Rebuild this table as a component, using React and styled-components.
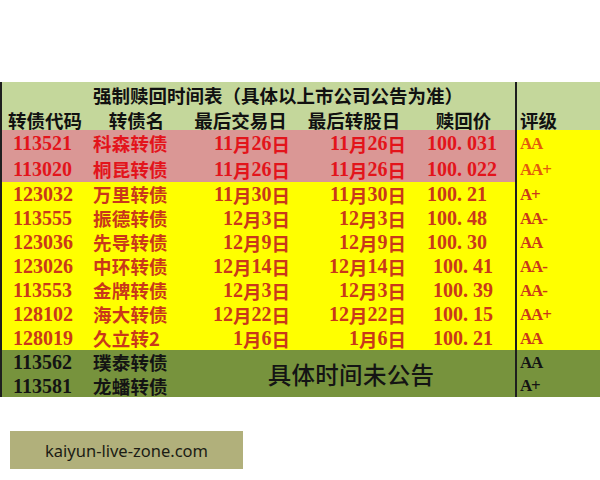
import React from "react";
import styled, { createGlobalStyle } from "styled-components";

const Global = createGlobalStyle`
  html, body { margin: 0; padding: 0; background: #ffffff; }
  body { width: 600px; height: 480px; overflow: hidden; }
`;

const CJK = `"Noto Sans CJK SC", "Noto Sans", sans-serif`;
const NUM = `"Liberation Serif", "Noto Sans CJK SC", serif`;

const tones = {
  head: { bg: "#c4d79b", fg: "#111111", rbg: "#c4d79b", rfg: "#111111" },
  pink: { bg: "#da9795", fg: "#e3141b", rbg: "#ffff00", rfg: "#e25a0c" },
  yellow: { bg: "#ffff00", fg: "#c9381a", rbg: "#ffff00", rfg: "#c9381a" },
  green: { bg: "#77933d", fg: "#141414", rbg: "#77933d", rfg: "#141414" },
};

const Page = styled.div`
  width: 600px;
  height: 480px;
  padding-top: 82px;
  box-sizing: border-box;
  display: flex;
  flex-direction: column;
`;

const Table = styled.div`
  display: grid;
  grid-template-columns: 86px 97px 111px 116px 103px 85px;
  grid-template-rows: 24px 24px 26px 26px repeat(7, 24px) 24px 23px;
  border-left: 2px solid #1e1e1e;
`;

const CellBase = styled.div`
  display: flex;
  align-items: center;
  white-space: nowrap;
  overflow: visible;
  background: ${(p) => tones[p.$tone].bg};
  color: ${(p) => tones[p.$tone].fg};
`;

const TitleCell = styled(CellBase)`
  grid-column: 1 / span 5;
  padding-left: 91px;
  padding-top: 1px;
  font-family: ${CJK};
  font-size: 18.5px;
  font-weight: 700;
`;

const HeadCell = styled(CellBase)`
  justify-content: center;
  padding-top: 3px;
  font-family: ${CJK};
  font-size: 18.5px;
  font-weight: 700;
`;

const RatingCell = styled(CellBase)`
  grid-column: 6;
  background: ${(p) => tones[p.$tone].rbg};
  color: ${(p) => tones[p.$tone].rfg};
  border-left: 2px solid #1e1e1e;
  padding-left: 3px;
  padding-top: ${(p) => (p.$head ? "3px" : "1px")};
  font-family: ${(p) => (p.$head ? CJK : NUM)};
  font-size: ${(p) => (p.$head ? "18.5px" : "17px")};
  letter-spacing: ${(p) => (p.$head ? "0" : "-1.2px")};
  font-weight: 700;
`;

const CodeCell = styled(CellBase)`
  grid-column: 1;
  padding-left: 11px;
  padding-top: 1px;
  font-family: ${NUM};
  font-size: 20px;
  font-weight: 700;
`;

const NameCell = styled(CellBase)`
  grid-column: 2;
  padding-left: 5px;
  font-family: ${CJK};
  font-size: 18.5px;
  font-weight: 700;
  letter-spacing: 0.2px;
`;

const DateCell = styled(CellBase)`
  justify-content: flex-end;
  padding-right: 6px;
  padding-top: 1px;
  font-family: ${NUM};
  font-size: 20px;
  font-weight: 700;
`;

const CjkChar = styled.span`
  font-family: ${CJK};
  font-size: 18.5px;
  font-weight: 700;
`;

const Dot = styled.span`
  display: inline-block;
  width: 10px;
`;

const PriceCell = styled(CellBase)`
  padding-left: ${(p) => 15 + (p.$shift || 0)}px;
  padding-top: 1px;
  font-family: ${NUM};
  font-size: 20px;
  font-weight: 700;
`;

const NoticeCell = styled(CellBase)`
  grid-column: 3 / span 3;
  grid-row: 12 / span 2;
  justify-content: center;
  padding-left: 2px;
  font-family: ${CJK};
  font-size: 23.5px;
  font-weight: 500;
  letter-spacing: 0.3px;
`;

const Watermark = styled.div`
  margin-top: 34px;
  margin-left: 10px;
  width: 233px;
  height: 38px;
  background: #b1b07b;
  display: flex;
  align-items: center;
  justify-content: center;
  font-family: "Noto Sans", "Open Sans", sans-serif;
  font-size: 16.5px;
  color: #1c1c14;
  padding-top: 1px;
  box-sizing: border-box;
`;

const rows = [
  { tone: "pink", code: "113521", name: "科森转债", trade: [11, 26], conv: [11, 26], price: "100.031", rating: "AA" },
  { tone: "pink", code: "113020", name: "桐昆转债", trade: [11, 26], conv: [11, 26], price: "100.022", rating: "AA+" },
  { tone: "yellow", code: "123032", name: "万里转债", trade: [11, 30], conv: [11, 30], price: "100.21", rating: "A+" },
  { tone: "yellow", code: "113555", name: "振德转债", trade: [12, 3], conv: [12, 3], price: "100.48", rating: "AA-" },
  { tone: "yellow", code: "123036", name: "先导转债", trade: [12, 9], conv: [12, 9], price: "100.30", rating: "AA" },
  { tone: "yellow", code: "123026", name: "中环转债", trade: [12, 14], conv: [12, 14], price: "100.41", rating: "AA-", shift: 6 },
  { tone: "yellow", code: "113553", name: "金牌转债", trade: [12, 3], conv: [12, 3], price: "100.39", rating: "AA-", shift: 6 },
  { tone: "yellow", code: "128102", name: "海大转债", trade: [12, 22], conv: [12, 22], price: "100.15", rating: "AA+", shift: 6 },
  { tone: "yellow", code: "128019", name: "久立转2", trade: [1, 6], conv: [1, 6], price: "100.21", rating: "AA", shift: 6 },
];

const pending = [
  { code: "113562", name: "璞泰转债", rating: "AA" },
  { code: "113581", name: "龙蟠转债", rating: "A+" },
];

const DateText = ({ value }) => (
  <>
    {value[0]}
    <CjkChar>月</CjkChar>
    {value[1]}
    <CjkChar>日</CjkChar>
  </>
);

const PriceText = ({ value }) => {
  const [a, b] = value.split(".");
  return (
    <>
      {a}
      <Dot>.</Dot>
      {b}
    </>
  );
};

export default function App() {
  return (
    <>
      <Global />
      <Page>
        <Table>
          <TitleCell $tone="head">强制赎回时间表（具体以上市公司公告为准）</TitleCell>
          <RatingCell $tone="head" $head />

          <HeadCell $tone="head">转债代码</HeadCell>
          <HeadCell $tone="head">转债名</HeadCell>
          <HeadCell $tone="head">最后交易日</HeadCell>
          <HeadCell $tone="head">最后转股日</HeadCell>
          <HeadCell $tone="head">赎回价</HeadCell>
          <RatingCell $tone="head" $head>评级</RatingCell>

          {rows.map((r) => (
            <React.Fragment key={r.code}>
              <CodeCell $tone={r.tone}>{r.code}</CodeCell>
              <NameCell $tone={r.tone}>{r.name}</NameCell>
              <DateCell $tone={r.tone}><DateText value={r.trade} /></DateCell>
              <DateCell $tone={r.tone}><DateText value={r.conv} /></DateCell>
              <PriceCell $tone={r.tone} $shift={r.shift}><PriceText value={r.price} /></PriceCell>
              <RatingCell $tone={r.tone}>{r.rating}</RatingCell>
            </React.Fragment>
          ))}

          <CodeCell $tone="green">{pending[0].code}</CodeCell>
          <NameCell $tone="green">{pending[0].name}</NameCell>
          <NoticeCell $tone="green">具体时间未公告</NoticeCell>
          <RatingCell $tone="green">{pending[0].rating}</RatingCell>
          <CodeCell $tone="green">{pending[1].code}</CodeCell>
          <NameCell $tone="green">{pending[1].name}</NameCell>
          <RatingCell $tone="green">{pending[1].rating}</RatingCell>
        </Table>
        <Watermark>kaiyun-live-zone.com</Watermark>
      </Page>
    </>
  );
}
